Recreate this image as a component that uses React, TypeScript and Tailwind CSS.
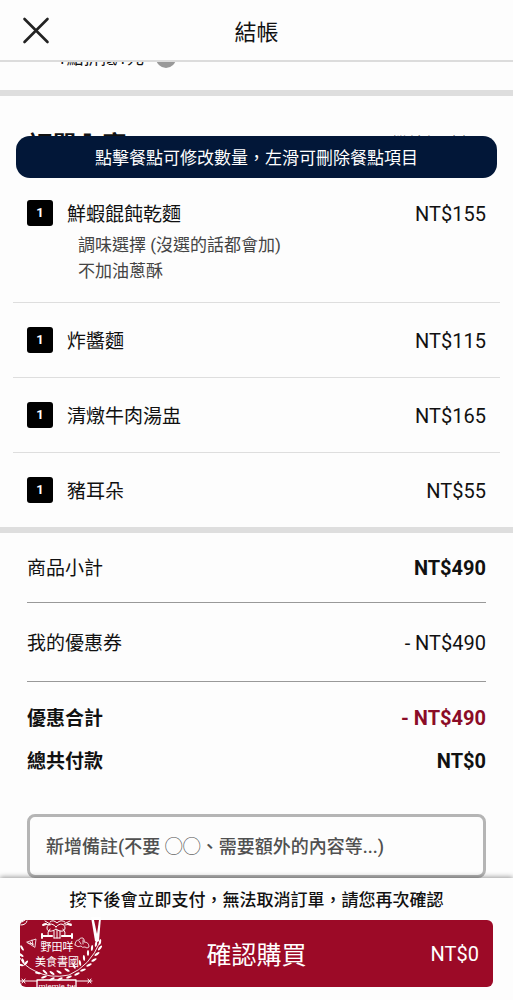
import type { ReactNode } from "react";

type Item = { name: string; qty: number; price: number; options?: string[] };

const items: Item[] = [
  { name: "鮮蝦餛飩乾麵", qty: 1, price: 155, options: ["調味選擇 (沒選的話都會加)", "不加油蔥酥"] },
  { name: "炸醬麵", qty: 1, price: 115 },
  { name: "清燉牛肉湯盅", qty: 1, price: 165 },
  { name: "豬耳朵", qty: 1, price: 55 },
];

function OrderItem({ item }: { item: Item }) {
  return (
    <li className="flex items-start px-3.5 pt-5 pb-[18px]">
      <span className="mt-1 flex size-[26px] shrink-0 items-center justify-center rounded-[3px] bg-black text-[13px] font-bold text-white">
        {item.qty}
      </span>
      <div className="ml-3.5 flex-1">
        <h3 className="pt-0.5 text-[19px] leading-[34px]">{item.name}</h3>
        {item.options && (
          <div className="pl-[11px] text-[17px] leading-[26px] text-[#444]">
            {item.options.map((o) => (
              <p key={o}>{o}</p>
            ))}
          </div>
        )}
      </div>
      <span className="text-[20px] leading-[36px]">NT${item.price}</span>
    </li>
  );
}

function SummaryRow({ label, children }: { label: string; children: ReactNode }) {
  return (
    <div className="flex items-center justify-between leading-[43px]">
      <dt className="text-[19px]">{label}</dt>
      <dd className="text-[20px]">{children}</dd>
    </div>
  );
}

/* Leaf positions along the wreath: x, y, rotation in degrees */
const leaves = [
  [22, 948, 60], [21, 955, 35], [23, 961, 70], [21, 965, 10], [26, 963, -50],
  [38, 973, 10], [44, 977, -20], [45, 972, 40], [52, 973, 35], [52, 979, -25],
  [59, 972, 30], [60, 979, -25], [67, 970, 30], [69, 977, -20],
  [74, 966, 65], [77, 974, -25], [80, 963, 80], [83, 970, -20], [84, 958, 85],
  [89, 965, -25], [88, 953, 90], [94, 960, -30], [92, 948, 95], [97, 954, -35],
  [96, 944, 100], [100, 948, -50], [100, 942, -80],
];

function Emblem() {
  return (
    <svg
      viewBox="16 890 92 100"
      className="pointer-events-none absolute bottom-2.5 left-4 h-[100px] w-[92px] text-white"
      aria-hidden="true"
    >
      <g fill="none" stroke="currentColor" strokeLinecap="round" strokeLinejoin="round">
        <path d="M75 900l6-5M76 904l8-4M77 908l6-3M85 903l-5 5" strokeWidth="1.8" />
        <path d="M21 925q5 0 6-4M22 922l3-2" strokeWidth="1" />
        <path
          d="M45 921l5 3M44 924l6 1M70 921l-6 3M71 924l-6 1M50 922q3-3 7 1q4-4 8-1M56 927c-4-5-9-3-9 1s5 4 9 1c4 3 9 3 9-1s-5-6-9-1M50 929q-3 3-2 6M63 929q3 3 2 6M54 931v7M57 930v8M60 931v7M54 938h6"
          strokeWidth="1"
        />
        <path d="M43 936h9M62 936h9" strokeWidth="2.2" />
        <path d="M42 934v4M72 934v4M43 925l3-1M71 925l-3-1" strokeWidth="2" />
        <path d="M27 942l9-3l-1 8zM30 942l3 3M32 940l1 5M28 943l5 1" strokeWidth="0.8" />
        <path d="M75 945q0-5 4-5q1-3 4-2q2 2 1 4q5 0 5 5q-2 2-4 0q-3 1-4-1q-3 2-6-1M79 941l2 3M83 940v4" strokeWidth="0.8" />
        <path d="M20 958q4 8 15 13q15 8 34 4Q90 966 100 942" strokeWidth="0.9" />
        <path d="M20 981h17M76 981h16M22 979l3 4M25 979l-3 4M88 979l3 4M91 979l-3 4" strokeWidth="1" />
        <path d="M37 987v-7h39v7" strokeWidth="1.3" />
      </g>
      <path d="M91 917l4 24q2 2 4 0l2-24z" fill="currentColor" />
      <path d="M94 920l3 14l2-14z" fill="#9c0a27" />
      {leaves.map(([x, y, r]) => (
        <ellipse key={`${x}-${y}`} cx={x} cy={y} rx="3" ry="1.1" transform={`rotate(${r} ${x} ${y})`} fill="currentColor" />
      ))}
      <g fill="currentColor" textAnchor="middle">
        <text x="57" y="951" fontSize="11">野田咩</text>
        <text x="57" y="966" fontSize="11">美食書國</text>
        <text x="57" y="989" fontSize="8">miemie.tw</text>
      </g>
    </svg>
  );
}

export default function App() {
  return (
    <div className="flex min-h-screen flex-col bg-[#fdfdfd] font-[Roboto,'Noto_Sans_CJK_TC',sans-serif] text-[#111]">
      <header className="relative z-10 flex h-[62px] items-center justify-center border-b-2 border-[#dcdcdc] bg-[#fdfdfd]">
        <button type="button" aria-label="關閉" className="absolute left-4 top-2.5">
          <svg viewBox="0 0 40 40" className="size-10" fill="none" stroke="#222" strokeWidth="2.6" strokeLinecap="round">
            <path d="M8.500 9L31.500 32M31.500 9L8.500 32" />
          </svg>
        </button>
        <h1 className="pt-1 text-[22px]">結帳</h1>
      </header>
      <main className="flex-1">
        <div className="h-7 overflow-hidden px-[57px]">
          <p className="-mt-4 flex items-center gap-3 text-[17px] leading-6">
            1點折抵1元
            <span className="flex size-5 items-center justify-center rounded-full bg-[#999] text-[13px] text-white">?</span>
          </p>
        </div>
        <section className="relative border-y-[6px] border-[#dedede] px-[13px]">
          <div className="flex h-20 items-start justify-between px-3.5 pt-8">
            <h2 className="text-[25px] leading-9 font-bold">訂單內容</h2>
            <span className="mr-2.5 pt-1 text-[17px] leading-6 text-[#555]">繼續加點餐</span>
          </div>
          <p className="absolute inset-x-4 top-10 rounded-[14px] bg-[#021738] pt-0.5 text-center text-[17px] leading-10 text-white">
            點擊餐點可修改數量，左滑可刪除餐點項目
          </p>
          <ul className="divide-y divide-[#dedede]">
            {items.map((item) => (
              <OrderItem key={item.name} item={item} />
            ))}
          </ul>
        </section>
        <dl className="px-[27px]">
          <div className="border-b border-[#999] pt-3.5 pb-3">
            <SummaryRow label="商品小計"><b>NT$490</b></SummaryRow>
          </div>
          <div className="border-b border-[#999] pt-[19px] pb-4">
            <SummaryRow label="我的優惠券">- NT$490</SummaryRow>
          </div>
          <div className="py-[15px] font-bold">
            <SummaryRow label="優惠合計"><span className="text-[#8b0c27]">- NT$490</span></SummaryRow>
            <SummaryRow label="總共付款">NT$0</SummaryRow>
          </div>
        </dl>
        <div className="px-[27px] pt-4">
          <input
            aria-label="新增備註"
            placeholder="新增備註(不要 ◯◯、需要額外的內容等...)"
            className="block h-16 w-full rounded-lg border-[3px] border-[#b5b5b5] px-4 text-[18px] font-medium placeholder:text-[#505050]"
          />
        </div>
      </main>
      <footer className="relative bg-[#fdfdfd] px-5 pb-[13px] shadow-[0_-1px_5px_rgba(0,0,0,0.4)]">
        <p className="pt-0.5 text-center text-[17px] leading-10 font-medium">按下後會立即支付，無法取消訂單，請您再次確認</p>
        <button type="button" className="relative flex h-[67px] w-full items-center justify-center rounded-md bg-[#9c0a27] text-white">
          <span className="pt-1 text-[25px]">確認購買</span>
          <span className="absolute right-3.5 text-[20px]">NT$0</span>
        </button>
        <Emblem />
      </footer>
    </div>
  );
}
